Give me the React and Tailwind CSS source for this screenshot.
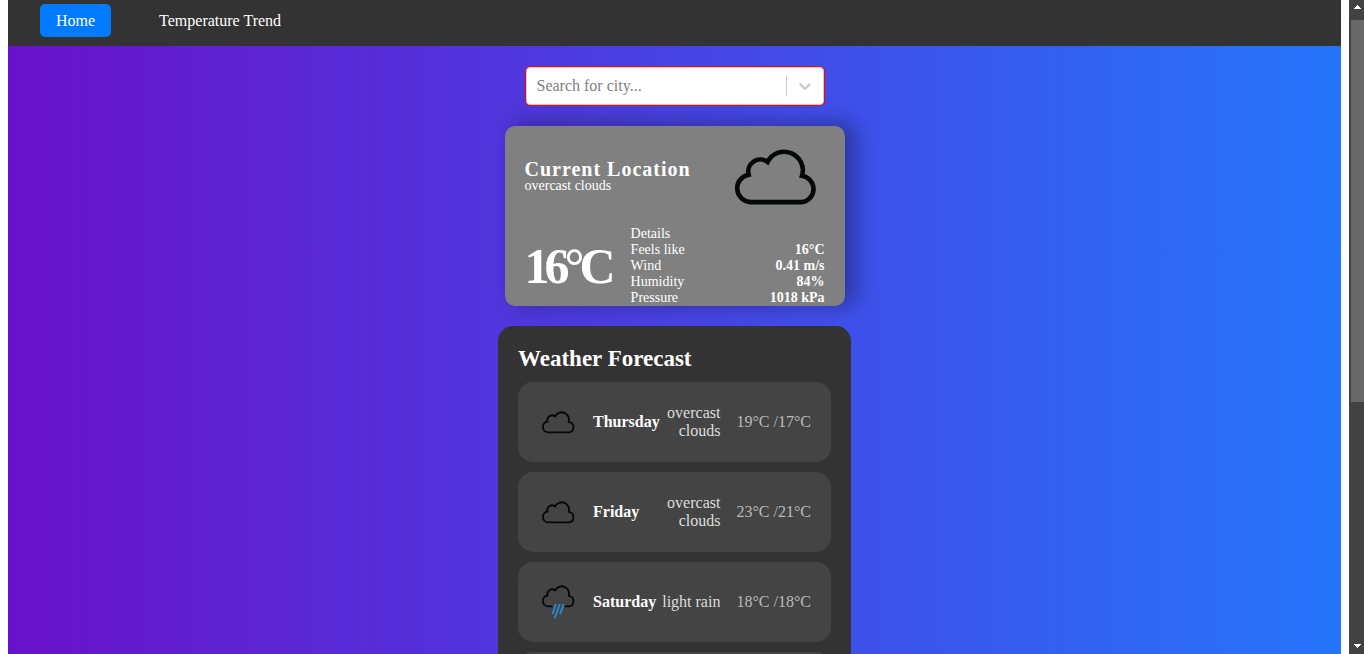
const forecast = [
  { day: 'Thursday', description: 'overcast clouds', temps: '19°C /17°C', icon: 'cloud' },
  { day: 'Friday', description: 'overcast clouds', temps: '23°C /21°C', icon: 'cloud' },
  { day: 'Saturday', description: 'light rain', temps: '18°C /18°C', icon: 'rain' },
  { day: 'Sunday', description: 'light rain', temps: '18°C /17°C', icon: 'rain' },
];

const details = [
  { label: 'Feels like', value: '16°C' },
  { label: 'Wind', value: '0.41 m/s' },
  { label: 'Humidity', value: '84%' },
  { label: 'Pressure', value: '1018 kPa' },
];

function CloudIcon({ className }) {
  return (
    <svg viewBox="0 0 100 100" className={className} fill="none" stroke="#040808" strokeWidth="4.6" aria-hidden="true">
      <path d="M25.5 76.1 A13.8 13.8 0 0 1 23.7 48.7 A12 12 0 0 1 42.6 36 A18.6 18.6 0 0 1 77 49.8 A13.3 13.3 0 0 1 77.4 76.1 Z" />
    </svg>
  );
}

function RainIcon({ className }) {
  return (
    <svg viewBox="0 0 100 100" className={className} fill="none" stroke="#040808" strokeWidth="4.6" aria-hidden="true">
      <path d="M36 61.1 H25.5 A13.8 13.8 0 0 1 23.7 33.7 A12 12 0 0 1 42.6 21 A18.6 18.6 0 0 1 77 34.8 A13.3 13.3 0 0 1 77.4 61.1 H67" />
      <g stroke="#2a88c8" strokeWidth="4.8">
        <path d="M44.5 55 L36.5 80" />
        <path d="M54.5 55 L41.5 91" />
        <path d="M64 55 L55 81" />
      </g>
    </svg>
  );
}

function NavBar() {
  return (
    <nav className="flex gap-8 bg-[#333] px-8 pt-1 pb-[9px] text-base text-white">
      <a href="#home" className="rounded-[5px] bg-[#007bff] px-4 py-2 leading-[17px]">Home</a>
      <a href="#trend" className="rounded-[5px] px-4 py-2 leading-[17px]">Temperature Trend</a>
    </nav>
  );
}

function CitySearch() {
  return (
    <div className="w-[300px] rounded-[5px] border border-[#f00]">
      <div className="flex items-center rounded border border-[#ccc] bg-white">
        <input
          type="text"
          aria-label="Search for city"
          placeholder="Search for city..."
          className="h-9 min-w-0 flex-1 bg-transparent px-[10px] text-base text-[#333] outline-none placeholder:text-[#808080]"
        />
        <span className="my-2 w-px self-stretch bg-[#ccc]" />
        <button type="button" aria-label="Show cities" className="p-2 text-[#ccc]">
          <svg viewBox="0 0 20 20" className="size-5" fill="currentColor" aria-hidden="true">
            <path d="M4.516 7.548c0.436-0.446 1.043-0.481 1.576 0l3.908 3.747 3.908-3.747c0.533-0.481 1.141-0.446 1.574 0 0.436 0.445 0.408 1.197 0 1.615-0.406 0.418-4.695 4.502-4.695 4.502-0.217 0.223-0.502 0.335-0.787 0.335s-0.57-0.112-0.789-0.335c0 0-4.287-4.084-4.695-4.502s-0.436-1.17 0-1.615z" />
          </svg>
        </button>
      </div>
    </div>
  );
}

function CurrentWeather() {
  return (
    <section className="w-[340px] rounded-[10px] bg-[#808080] px-5 text-white shadow-[10px_-2px_20px_2px_rgba(0,0,0,0.3)]">
      <div className="flex items-center justify-between">
        <div>
          <h1 className="text-xl leading-5 font-bold tracking-[1px]">Current Location</h1>
          <p className="text-sm leading-[14px]">overcast clouds</p>
        </div>
        <CloudIcon className="size-[100px]" />
      </div>
      <div className="flex items-center">
        <p className="text-[50px] leading-[57px] font-bold tracking-[-5px]">16°C</p>
        <dl className="flex-1 pl-5 text-sm leading-4">
          <div>Details</div>
          {details.map((row) => (
            <div key={row.label} className="flex justify-between">
              <dt>{row.label}</dt>
              <dd className="font-bold">{row.value}</dd>
            </div>
          ))}
        </dl>
      </div>
    </section>
  );
}

function ForecastRow({ item }) {
  const Icon = item.icon === 'rain' ? RainIcon : CloudIcon;
  return (
    <li className="flex h-20 items-center rounded-[15px] bg-[#444] px-5 text-base leading-[18px]">
      <Icon className="mr-[15px] size-10 shrink-0" />
      <span className="flex-1 font-bold text-white">{item.day}</span>
      <span className="max-w-[60px] text-right text-[#ddd]">{item.description}</span>
      <span className="ml-4 whitespace-nowrap text-[#bbb]">{item.temps}</span>
    </li>
  );
}

function Forecast() {
  return (
    <section className="w-[353px] rounded-[15px] bg-[#333] p-5">
      <h2 className="mb-[10px] text-[23px] leading-[26px] font-bold text-white">Weather Forecast</h2>
      <ul className="flex flex-col gap-[10px]">
        {forecast.map((item) => (
          <ForecastRow key={item.day} item={item} />
        ))}
      </ul>
    </section>
  );
}

function ScrollTrack() {
  return (
    <div className="flex w-[15px] shrink-0 flex-col items-center bg-[#424242]" aria-hidden="true">
      <svg viewBox="0 0 15 20" className="h-5 w-full" fill="#fff" shapeRendering="crispEdges">
        <path d="M8 5h1v1h1v1h1v1h1v1H5V8h1V7h1V6h1z" />
      </svg>
      <div className="ml-[2px] h-[382px] self-stretch bg-[#686868]" />
      <svg viewBox="0 0 15 14" className="mt-auto h-[14px] w-full" fill="#fff" shapeRendering="crispEdges">
        <path d="M5 4h7v1h-1v1h-1v1H9v1H8V7H7V6H6V5H5z" />
      </svg>
    </div>
  );
}

export default function App() {
  return (
    <div className="flex h-screen overflow-hidden bg-white font-['Liberation_Serif','Times_New_Roman',serif]">
      <div className="min-w-0 flex-1 px-2">
        <NavBar />
        <main className="flex flex-col items-center gap-5 bg-linear-to-r/srgb from-[#6a11cb] to-[#2575fc] py-5">
          <CitySearch />
          <CurrentWeather />
          <Forecast />
        </main>
      </div>
      <ScrollTrack />
    </div>
  );
}
